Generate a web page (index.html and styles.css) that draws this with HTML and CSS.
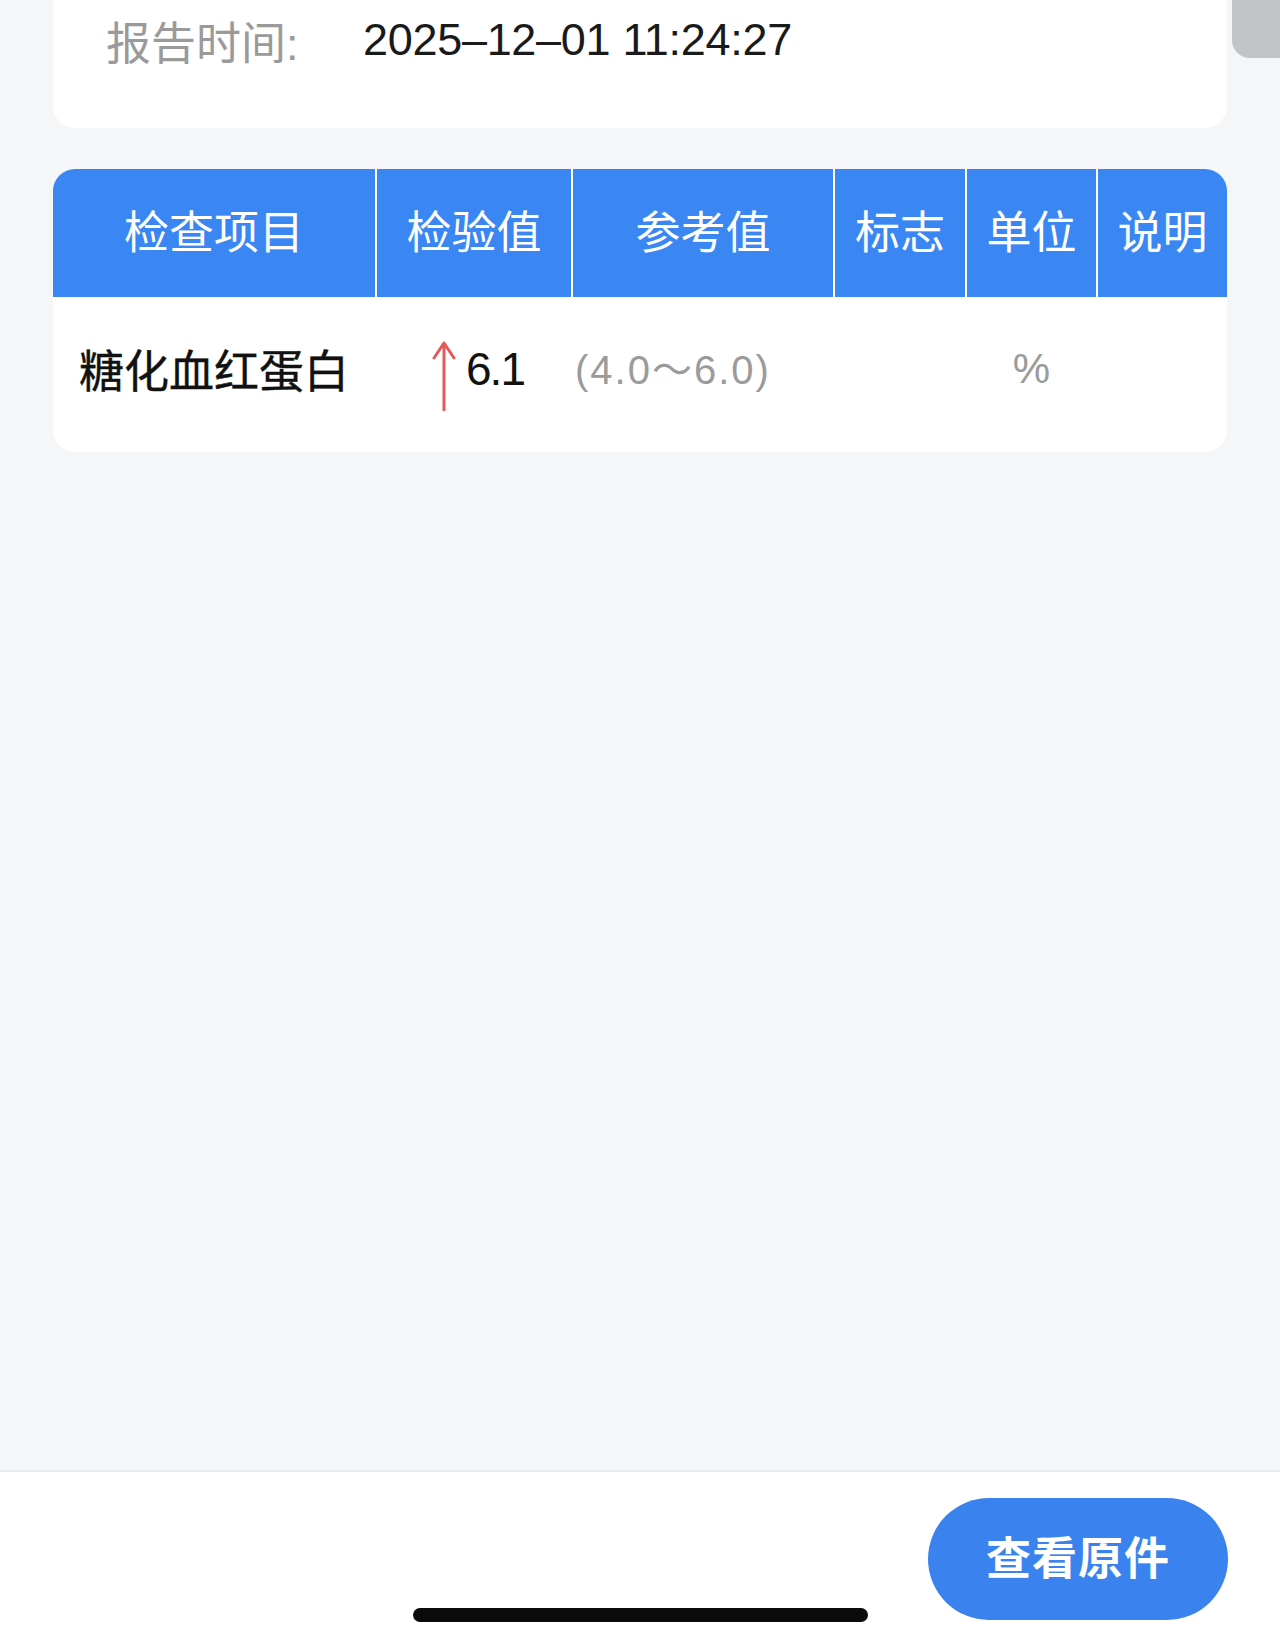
FILE: index.html
```html
<!DOCTYPE html>
<html lang="zh-CN">
<head>
<meta charset="utf-8">
<title>检验报告</title>
<link rel="stylesheet" href="styles.css">
</head>
<body>
<div class="page">
  <div class="scroll-tab"></div>
  <main class="content">
    <section class="info-card">
      <div class="info-row">
        <span class="info-label">报告时间:</span>
        <span class="info-value">2025–12–01 11:24:27</span>
      </div>
    </section>
    <section class="table-card">
      <div class="t-head">
        <div class="th">检查项目</div>
        <div class="th">检验值</div>
        <div class="th">参考值</div>
        <div class="th">标志</div>
        <div class="th">单位</div>
        <div class="th">说明</div>
      </div>
      <div class="t-row">
        <div class="td td-name">糖化血红蛋白</div>
        <div class="td td-value">
          <svg class="arrow-up" width="24" height="70" viewBox="0 0 24 70" aria-hidden="true">
            <path d="M12 2 L12 69 M2 17 L12 2 L22 17" fill="none" stroke="#e5585b" stroke-width="3" stroke-linecap="round" stroke-linejoin="round"/>
          </svg>
          <span class="val">6.1</span>
        </div>
        <div class="td td-ref">(4.0～6.0)</div>
        <div class="td"></div>
        <div class="td td-unit">%</div>
        <div class="td"></div>
      </div>
    </section>
  </main>
  <footer class="bottom-bar">
    <button class="btn-origin">查看原件</button>
    <div class="home-indicator"></div>
  </footer>
</div>
</body>
</html>
```
FILE: styles.css
```css
html, body {
  margin: 0;
  padding: 0;
}
body {
  background: #f5f6f8;
  font-family: "Liberation Sans", "Noto Sans CJK SC", sans-serif;
}
.page {
  position: relative;
  width: 1280px;
  height: 1646px;
  display: flex;
  flex-direction: column;
  overflow: hidden;
}
.scroll-tab {
  position: absolute;
  top: 0;
  right: 0;
  width: 48px;
  height: 58px;
  background: #c3c4c7;
  border-bottom-left-radius: 18px;
}
.content {
  flex: 1;
  padding: 0 53px;
  display: flex;
  flex-direction: column;
  gap: 41px;
}
.info-card {
  background: #ffffff;
  height: 128px;
  border-radius: 0 0 22px 22px;
  box-sizing: border-box;
  padding: 12px 0 0 53px;
}
.info-row {
  display: flex;
  align-items: center;
  height: 56px;
  font-size: 45px;
}
.info-label {
  color: #9a9a9a;
  width: 257px;
}
.info-value {
  color: #1a1a1a;
  letter-spacing: -0.3px;
}
.table-card {
  background: #ffffff;
  border-radius: 22px;
  overflow: hidden;
}
.t-head, .t-row {
  display: grid;
  grid-template-columns: 322px 194px 260px 130px 129px 129px;
  column-gap: 2px;
}
.t-head {
  background: #ffffff;
  height: 128px;
}
.th {
  background: #3a86f3;
  color: #ffffff;
  font-size: 45px;
  display: flex;
  align-items: center;
  justify-content: center;
  padding-bottom: 8px;
}
.t-row {
  height: 155px;
}
.td {
  display: flex;
  align-items: center;
  justify-content: center;
  font-size: 45px;
  padding-bottom: 12px;
}
.td-name {
  color: #111111;
  font-weight: 400;
  -webkit-text-stroke: 0.4px #111111;
}
.td-value {
  padding-left: 8px;
}
.arrow-up {
  margin-top: 14px;
  margin-right: 10px;
  flex: none;
}
.val {
  color: #111111;
  font-size: 46px;
  letter-spacing: -2px;
}
.td-ref {
  justify-content: flex-start;
  padding-left: 2px;
  padding-bottom: 16px;
  color: #9b9b9b;
  font-size: 40px;
  letter-spacing: 2px;
}
.td-unit {
  color: #9b9b9b;
  font-size: 42px;
}
.bottom-bar {
  position: relative;
  height: 176px;
  flex: none;
  background: #ffffff;
  border-top: 2px solid #e8e9ec;
  box-sizing: border-box;
  display: flex;
  justify-content: flex-end;
  align-items: flex-start;
  padding: 26px 52px 0 0;
}
.btn-origin {
  width: 300px;
  height: 122px;
  border: none;
  border-radius: 61px;
  background: #3a83ef;
  color: #ffffff;
  font-family: "Noto Sans CJK SC", sans-serif;
  font-size: 45px;
  font-weight: 700;
  letter-spacing: 1px;
  padding: 0 0 8px 0;
}
.home-indicator {
  position: absolute;
  left: 413px;
  top: 136px;
  width: 455px;
  height: 14px;
  border-radius: 7px;
  background: #0b0b0b;
}
```
